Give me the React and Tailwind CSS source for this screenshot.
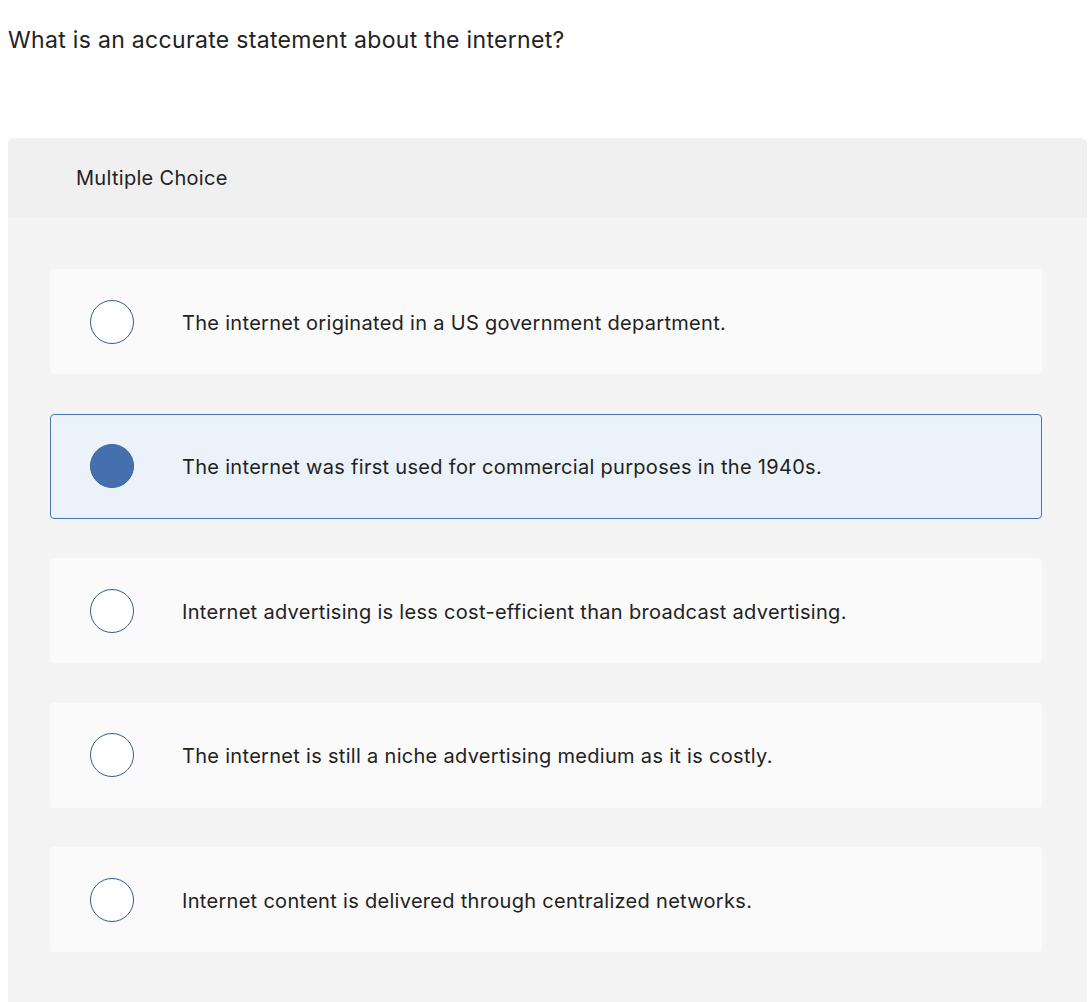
import React, { useState } from 'react';

const options = [
  'The internet originated in a US government department.',
  'The internet was first used for commercial purposes in the 1940s.',
  'Internet advertising is less cost-efficient than broadcast advertising.',
  'The internet is still a niche advertising medium as it is costly.',
  'Internet content is delivered through centralized networks.',
];

export default function App() {
  const [selected, setSelected] = useState(1);

  return (
    <div className="min-h-screen bg-white text-[#222] font-['Inter','Liberation_Sans',sans-serif]">
      <div className="pl-2 pr-[5px]">
        <h1 className="pt-[26px] text-[23px] leading-[28px] tracking-[0.32px]">
          What is an accurate statement about the internet?
        </h1>

        <div className="mt-[84px] rounded-t-[6px] overflow-hidden">
          <div className="h-[79px] bg-[#f0f0f0] flex items-center pl-[68px] text-[20px] tracking-[0.3px]">
            Multiple Choice
          </div>

          <div className="bg-[#f4f4f4] pl-[42px] pr-[45px] pt-[52px] pb-[52px] flex flex-col gap-[39.5px]">
            {options.map((text, i) => {
              const active = selected === i;
              return (
                <button
                  key={i}
                  onClick={() => setSelected(i)}
                  className={`h-[105px] rounded-[4px] flex items-center text-left border ${
                    active ? 'bg-[#ebf2fa] border-[#4a76b5]' : 'bg-[#fafafa] border-transparent'
                  }`}
                >
                  <span
                    className={`ml-[39px] w-[44px] h-[44px] rounded-full shrink-0 border ${
                      active ? 'bg-[#466fae] border-[#3e63a0]' : 'bg-white border-[#345a96]'
                    }`}
                  />
                  <span className="ml-[48px] pt-[2px] text-[20px] tracking-[0.3px]">{text}</span>
                </button>
              );
            })}
          </div>
        </div>
      </div>
    </div>
  );
}
